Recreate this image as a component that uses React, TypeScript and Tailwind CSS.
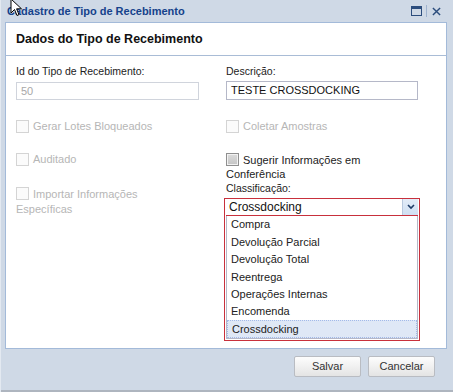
import React from 'react';

const font = { fontFamily: '"Liberation Sans", Arial, sans-serif' };

const options = [
  'Compra',
  'Devolução Parcial',
  'Devolução Total',
  'Reentrega',
  'Operações Internas',
  'Encomenda',
  'Crossdocking',
];

const Check = ({ enabled = false }: { enabled?: boolean }) => (
  <span
    className={`inline-block w-[13px] h-[13px] shrink-0 border align-[-2px] mr-[4px] ${
      enabled
        ? 'border-[#8f8f8f] bg-gradient-to-b from-[#dcdcdc] to-[#c4c4c4] shadow-[inset_0_0_0_1px_#f2f2f2]'
        : 'border-[#d4d4d4] bg-[#fbfbfb]'
    }`}
  />
);

export default function App() {
  return (
    <div
      className="relative w-[453px] h-[392px] bg-[#cfd9e6] border-l border-[#e3e9f1] flex flex-col text-[11px] text-[#222]"
      style={font}
    >
      {/* title bar */}
      <div className="h-[22px] flex items-center justify-between pl-[6px] pr-[10px]">
        <span className="font-bold text-[11px] text-[#15428b]">Cadastro de Tipo de Recebimento</span>
        <div className="flex items-center gap-[3px]">
          <span className="w-[13px] h-[14px] flex items-center justify-center">
            <svg width="11" height="10" viewBox="0 0 11 10">
              <rect x="0.5" y="0.5" width="10" height="9" fill="none" stroke="#2c4d7d" />
              <rect x="1" y="1" width="9" height="2" fill="#2c4d7d" />
            </svg>
          </span>
          <span className="w-[1px] h-[12px] bg-[#9fb3cf]" />
          <span className="w-[13px] h-[14px] flex items-center justify-center">
            <svg width="9" height="9" viewBox="0 0 10 10">
              <path d="M1 1 L9 9 M9 1 L1 9" stroke="#2c4d7d" strokeWidth="1.6" />
            </svg>
          </span>
        </div>
      </div>

      {/* main panel */}
      <div className="ml-[4px] mr-[6px] h-[327px] bg-white border border-[#a3bad9] flex flex-col">
        <div className="h-[33px] shrink-0 border-b border-[#a9bcd6] flex items-center px-[10px]">
          <span className="font-bold text-[12.5px] text-[#111]">Dados do Tipo de Recebimento</span>
        </div>

        <div className="flex pl-[10px] pt-[9px]">
          {/* left column */}
          <div className="w-[210px] flex flex-col">
            <div className="leading-[13px] text-[10.5px] text-[#222]">Id do Tipo de Recebimento:</div>
            <div className="mt-[4px] w-[183px] h-[18px] border border-[#d0d4dc] bg-white flex items-center px-[4px] text-[11px] text-[#a8a8a8]">
              50
            </div>
            <div className="mt-[20px] h-[13px] flex items-center text-[11px] text-[#b6b6b6]">
              <Check />
              Gerar Lotes Bloqueados
            </div>
            <div className="mt-[20px] h-[13px] flex items-center text-[11px] text-[#b6b6b6]">
              <Check />
              Auditado
            </div>
            <div className="mt-[21px] text-[11px] leading-[15px] text-[#b6b6b6]">
              <Check />
              Importar Informações
              <br />
              Específicas
            </div>
          </div>

          {/* right column */}
          <div className="w-[196px] flex flex-col">
            <div className="leading-[13px] text-[10.5px] text-[#222]">Descrição:</div>
            <div className="mt-[3px] w-[192px] h-[19px] border border-[#b5b8c8] bg-white flex items-center px-[4px] text-[11px] text-[#111]">
              TESTE CROSSDOCKING
            </div>
            <div className="mt-[20px] h-[13px] flex items-center text-[11px] text-[#b6b6b6]">
              <Check />
              Coletar Amostras
            </div>
            <div className="mt-[20px] text-[11px] leading-[14px] text-[#222]">
              <Check enabled />
              Sugerir Informações em
              <br />
              Conferência
            </div>
            <div className="mt-[1px] leading-[13px] text-[10.5px] text-[#222]">Classificação:</div>
            <div className="mt-[3px] -ml-[2px] w-[196px] border border-[#c8303c] p-[1px] pt-0">
              <div className="h-[17px] flex border-b border-[#c8303c]">
                <div className="flex-1 flex items-center px-[3px] text-[12px] text-[#111]">Crossdocking</div>
                <div className="w-[16px] bg-gradient-to-b from-[#e3ecf8] to-[#cfdff2] border-l border-[#b8c8de] flex items-center justify-center">
                  <svg width="8" height="6" viewBox="0 0 8 6">
                    <path d="M1 1 L4 4 L7 1" fill="none" stroke="#1d3b66" strokeWidth="1.6" />
                  </svg>
                </div>
              </div>
              <div className="border border-t-0 border-[#b5b8c8] bg-white">
                {options.map((o, i) => (
                  <div
                    key={o}
                    className={`h-[17.4px] flex items-center px-[4px] text-[11px] text-[#222] ${
                      i === options.length - 1 ? 'bg-[#dfe8f6] border border-dotted border-[#a3bae9]' : ''
                    }`}
                  >
                    {o}
                  </div>
                ))}
              </div>
            </div>
          </div>
        </div>
      </div>

      {/* footer */}
      <div className="flex-1 flex items-start justify-end gap-[7px] pr-[18px] pt-[7px]">
        {['Salvar', 'Cancelar'].map((b) => (
          <button
            key={b}
            className="w-[67px] h-[21px] rounded-[2px] border border-[#b9bcc2] bg-gradient-to-b from-[#fdfdfd] to-[#e4e4e4] text-[11px] text-[#333]"
            style={font}
          >
            {b}
          </button>
        ))}
      </div>
      <div className="h-[2px] bg-[#aeb5bf]" />

      {/* mouse pointer */}
      <svg className="absolute left-[9px] top-[-2px]" width="14" height="20" viewBox="0 0 14 20">
        <path d="M1 1 L1 15 L4.5 11.5 L7 17.5 L9 16.6 L6.6 10.8 L11.5 10.8 Z" fill="#fff" stroke="#000" strokeWidth="1" strokeLinejoin="round" />
      </svg>
    </div>
  );
}
